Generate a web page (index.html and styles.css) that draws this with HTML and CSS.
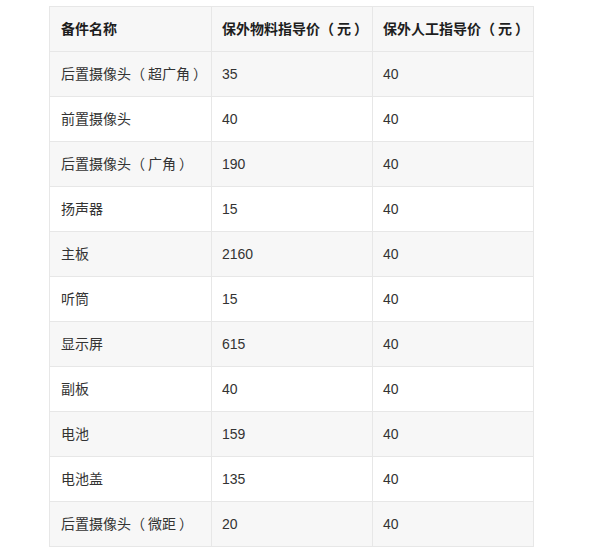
FILE: index.html
```html
<!DOCTYPE html>
<html lang="zh-CN">
<head>
<meta charset="utf-8">
<title>备件价格</title>
<link rel="stylesheet" href="styles.css">
</head>
<body>
<table class="price-table">
  <colgroup>
    <col class="c1"><col class="c2"><col class="c3">
  </colgroup>
  <thead>
    <tr><th>备件名称</th><th>保外物料指导价<span class="po">（</span>元<span class="pc">）</span></th><th>保外人工指导价<span class="po">（</span>元<span class="pc">）</span></th></tr>
  </thead>
  <tbody>
    <tr><td>后置摄像头<span class="po">（</span>超广角<span class="pc">）</span></td><td>35</td><td>40</td></tr>
    <tr><td>前置摄像头</td><td>40</td><td>40</td></tr>
    <tr><td>后置摄像头<span class="po">（</span>广角<span class="pc">）</span></td><td>190</td><td>40</td></tr>
    <tr><td>扬声器</td><td>15</td><td>40</td></tr>
    <tr><td>主板</td><td>2160</td><td>40</td></tr>
    <tr><td>听筒</td><td>15</td><td>40</td></tr>
    <tr><td>显示屏</td><td>615</td><td>40</td></tr>
    <tr><td>副板</td><td>40</td><td>40</td></tr>
    <tr><td>电池</td><td>159</td><td>40</td></tr>
    <tr><td>电池盖</td><td>135</td><td>40</td></tr>
    <tr><td>后置摄像头<span class="po">（</span>微距<span class="pc">）</span></td><td>20</td><td>40</td></tr>
  </tbody>
</table>
</body>
</html>
```
FILE: styles.css
```css
html, body {
  margin: 0;
  padding: 0;
  background: #ffffff;
}
body {
  padding: 6px 0 0 49px;
  font-family: "Liberation Sans", "Noto Sans CJK SC", sans-serif;
  font-size: 14px;
  color: #333333;
}
.price-table {
  border-collapse: collapse;
  table-layout: fixed;
  width: 484px;
}
.c1 { width: 162px; }
.c2 { width: 161px; }
.c3 { width: 161px; }
.price-table th,
.price-table td {
  height: 44px;
  padding: 0 10px 0 11px;
  border: 1px solid #e7e7e7;
  text-align: left;
  vertical-align: middle;
  white-space: nowrap;
  line-height: 20px;
}
.price-table td + td,
.price-table th + th {
  padding-left: 10px;
}
.price-table th {
  font-weight: bold;
  color: #1e1e1e;
  background: #f7f7f7;
}
.price-table tbody tr:nth-child(odd) td {
  background: #f7f7f7;
}
.price-table tbody tr:nth-child(even) td {
  background: #ffffff;
}
.po {
  margin-right: 3px;
}
.pc {
  margin-left: 3px;
}
```
